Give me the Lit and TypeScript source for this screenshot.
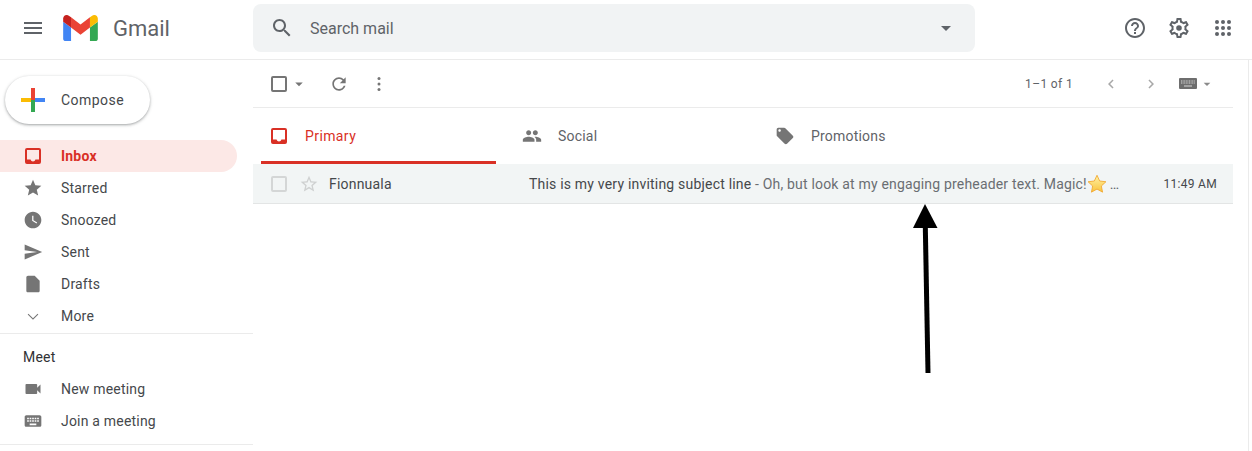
import { LitElement, html, css, svg } from 'lit';
import { customElement } from 'lit/decorators.js';

// material icon paths, 24x24 box
const P = {
  menu: 'M3 18h18v-2H3v2zm0-5h18v-2H3v2zm0-7v2h18V6H3z',
  search: 'M15.5 14h-.79l-.28-.27C15.41 12.59 16 11.11 16 9.5 16 5.91 13.09 3 9.5 3S3 5.91 3 9.5 5.91 16 9.5 16c1.61 0 3.09-.59 4.23-1.57l.27.28v.79l5 4.99L20.49 19l-4.99-5zm-6 0C7.01 14 5 11.99 5 9.5S7.01 5 9.5 5 14 7.01 14 9.5 11.99 14 9.5 14z',
  help: 'M11 18h2v-2h-2v2zm1-16C6.48 2 2 6.48 2 12s4.48 10 10 10 10-4.48 10-10S17.52 2 12 2zm0 18c-4.41 0-8-3.59-8-8s3.59-8 8-8 8 3.59 8 8-3.59 8-8 8zm0-14c-2.21 0-4 1.79-4 4h2c0-1.1.9-2 2-2s2 .9 2 2c0 2-3 1.75-3 5h2c0-2.25 3-2.5 3-5 0-2.21-1.79-4-4-4z',
  gear: 'M19.43 12.98c.04-.32.07-.64.07-.98 0-.34-.03-.66-.07-.98l2.11-1.65c.19-.15.24-.42.12-.64l-2-3.46c-.09-.16-.26-.25-.44-.25-.06 0-.12.01-.17.03l-2.49 1c-.52-.4-1.08-.73-1.69-.98l-.38-2.65C14.46 2.18 14.25 2 14 2h-4c-.25 0-.46.18-.49.42l-.38 2.65c-.61.25-1.17.59-1.69.98l-2.49-1c-.06-.02-.12-.03-.18-.03-.17 0-.34.09-.43.25l-2 3.46c-.13.22-.07.49.12.64l2.11 1.65c-.04.32-.07.65-.07.98 0 .33.03.66.07.98l-2.11 1.65c-.19.15-.24.42-.12.64l2 3.46c.09.16.26.25.44.25.06 0 .12-.01.17-.03l2.49-1c.52.4 1.08.73 1.69.98l.38 2.65c.03.24.24.42.49.42h4c.25 0 .46-.18.49-.42l.38-2.65c.61-.25 1.17-.59 1.69-.98l2.49 1c.06.02.12.03.18.03.17 0 .34-.09.43-.25l2-3.46c.12-.22.07-.49-.12-.64l-2.11-1.65zm-1.98-1.71c.04.31.05.52.05.73 0 .21-.02.43-.05.73l-.14 1.13.89.7 1.08.84-.7 1.21-1.27-.51-1.04-.42-.9.68c-.43.32-.84.56-1.25.73l-1.06.43-.16 1.13-.2 1.35h-1.4l-.19-1.35-.16-1.13-1.06-.43c-.43-.18-.83-.41-1.23-.71l-.91-.7-1.06.43-1.27.51-.7-1.21 1.08-.84.89-.7-.14-1.13c-.03-.31-.05-.54-.05-.74s.02-.43.05-.73l.14-1.13-.89-.7-1.08-.84.7-1.21 1.27.51 1.04.42.9-.68c.43-.32.84-.56 1.25-.73l1.06-.43.16-1.13.2-1.35h1.39l.19 1.35.16 1.13 1.06.43c.43.18.83.41 1.23.71l.91.7 1.06-.43 1.27-.51.7 1.21-1.07.85-.89.7.14 1.13zM12 9.200a2.800 2.800 0 1 0 0 5.600 2.800 2.800 0 0 0 0-5.600z',
  refresh: 'M17.65 6.35C16.2 4.9 14.21 4 12 4c-4.42 0-7.99 3.58-7.99 8s3.57 8 7.99 8c3.73 0 6.84-2.55 7.73-6h-2.08c-.82 2.33-3.04 4-5.65 4-3.31 0-6-2.69-6-6s2.69-6 6-6c1.66 0 3.14.69 4.22 1.78L13 11h7V4l-2.35 2.35z',
  star: 'M12 17.27L18.18 21l-1.64-7.03L22 9.24l-7.19-.61L12 2 9.19 8.63 2 9.24l5.46 4.73L5.82 21z',
  starOutline: 'M22 9.24l-7.19-.62L12 2 9.19 8.63 2 9.24l5.46 4.73L5.82 21 12 17.27 18.18 21l-1.63-7.03L22 9.24zM12 15.4l-3.76 2.27 1-4.28-3.32-2.88 4.38-.38L12 6.1l1.71 4.04 4.38.38-3.32 2.88 1 4.28L12 15.4z',
  clock: 'M11.99 2C6.47 2 2 6.48 2 12s4.47 10 9.99 10C17.52 22 22 17.52 22 12S17.52 2 11.99 2zM16.2 16.2L11 13V7h1.5v5.2l4.5 2.7-.8 1.3z',
  send: 'M2.01 21L23 12 2.01 3 2 10l15 2-15 2z',
  draft: 'M14 2H6c-1.1 0-1.99.9-1.99 2L4 20c0 1.1.89 2 1.99 2H18c1.1 0 2-.9 2-2V8l-6-6z',
  down: 'M6.500 9.200L12 14.700l5.500-5.500.9.9-6.400 6.400-6.400-6.400z',
  video: 'M17 10.5V7c0-.55-.45-1-1-1H4c-.55 0-1 .45-1 1v10c0 .55.45 1 1 1h12c.55 0 1-.45 1-1v-3.5l4 4v-11l-4 4z',
  keyboard: 'M20 5H4c-1.1 0-1.99.9-1.99 2L2 17c0 1.1.9 2 2 2h16c1.1 0 2-.9 2-2V7c0-1.1-.9-2-2-2zm-9 3h2v2h-2V8zm0 3h2v2h-2v-2zM8 8h2v2H8V8zm0 3h2v2H8v-2zm-1 2H5v-2h2v2zm0-3H5V8h2v2zm9 7H8v-2h8v2zm0-4h-2v-2h2v2zm0-3h-2V8h2v2zm3 3h-2v-2h2v2zm0-3h-2V8h2v2z',
  people: 'M16 11c1.66 0 2.99-1.34 2.99-3S17.66 5 16 5c-1.66 0-3 1.34-3 3s1.34 3 3 3zm-8 0c1.66 0 2.99-1.34 2.99-3S9.66 5 8 5C6.34 5 5 6.34 5 8s1.34 3 3 3zm0 2c-2.33 0-7 1.17-7 3.5V19h14v-2.5c0-2.33-4.67-3.5-7-3.5zm8 0c-.29 0-.62.02-.97.05 1.16.84 1.97 1.97 1.97 3.45V19h6v-2.5c0-2.33-4.67-3.5-7-3.5z',
  tag: 'M21.41 11.58l-9-9C12.05 2.22 11.55 2 11 2H4c-1.1 0-2 .9-2 2v7c0 .55.22 1.05.59 1.42l9 9c.36.36.86.58 1.41.58.55 0 1.05-.22 1.41-.59l7-7c.37-.36.59-.86.59-1.41 0-.55-.23-1.06-.59-1.42zM5.5 7C4.67 7 4 6.33 4 5.5S4.67 4 5.5 4 7 4.67 7 5.5 6.33 7 5.5 7z',
  chevLeft: 'M15.41 7.41L14 6l-6 6 6 6 1.41-1.41L10.83 12z',
  chevRight: 'M8.59 16.59L10 18l6-6-6-6-1.41 1.41L13.17 12z',
  caret: 'M7 10l5 5 5-5z',
};

const icon = (d: string, cls = '') => html`<svg class="icon ${cls}" viewBox="0 0 24 24"><path d=${d}></path></svg>`;

const inboxIcon = html`<svg class="inbox-icon" viewBox="0 0 16 16"><path fill-rule="evenodd" d="M2 0h12a2 2 0 0 1 2 2v12a2 2 0 0 1-2 2H2a2 2 0 0 1-2-2V2a2 2 0 0 1 2-2zM2 2v9.5h3.6c.3 1.3 1.2 2 2.4 2s2.1-.7 2.400-2H14V2z"></path></svg>`;

const nav = [
  { label: 'Starred', d: P.star },
  { label: 'Snoozed', d: P.clock },
  { label: 'Sent', d: P.send },
  { label: 'Drafts', d: P.draft },
  { label: 'More', d: P.down },
];

@customElement('app-root')
export class AppRoot extends LitElement {
  static styles = css`
    :host {
      display: block;
      position: relative;
      width: 1252px;
      height: 451px;
      overflow: hidden;
      background: #fff;
      color: #45484b;
      font-family: Roboto, "Liberation Sans", sans-serif;
      font-size: 14px;
      letter-spacing: 0.2px;
    }
    .icon { display: block; width: 24px; height: 24px; fill: #757575; flex: none; }

    /* header */
    .header { display: flex; align-items: center; height: 56px; padding-bottom: 3px; border-bottom: 1px solid #ebebeb; }
    .menu { margin-left: 21px; fill: #5f6368; }
    .logo { width: 35px; height: 26px; margin-left: 18px; flex: none; }
    .brand { width: 140px; margin-left: 15px; font-size: 22px; color: #5f6368; letter-spacing: 0; flex: none; }
    .search { display: flex; align-items: center; width: 722px; height: 48px; background: #f1f3f4; border-radius: 8px; flex: none; }
    .search .icon { margin-left: 17px; fill: #5f6368; }
    .search span { margin-left: 16px; font-size: 16px; color: #5f6368; letter-spacing: 0; flex: 1; }
    .search .caret { margin-right: 17px; fill: #5f6368; }
    .top-icons { display: flex; gap: 20px; margin-left: 148px; }
    .top-icons .icon { fill: #5f6368; }

    .body { display: flex; height: 391px; }

    /* sidebar */
    .side { width: 253px; flex: none; padding-top: 16px; }
    .compose { display: flex; align-items: center; width: 145px; height: 48px; margin-left: 5px; border-radius: 24px; background: #fff; box-shadow: 0 1px 2px rgba(60,64,67,.3), 0 1px 3px 1px rgba(60,64,67,.15); letter-spacing: 0.45px; color: #45484b; }
    .plus { width: 24px; height: 24px; margin-left: 16px; margin-right: 16px; }
    .items { margin-top: 16px; }
    .item { display: flex; align-items: center; height: 32px; width: 237px; border-radius: 0 16px 16px 0; }
    .item .icon { width: 20px; height: 20px; margin-left: 23px; margin-right: 18px; }
    .item.active { background: #fce8e6; color: #d93025; font-weight: 700; }
    .inbox-icon { display: block; width: 16px; height: 16px; fill: #d93025; flex: none; }
    .item .inbox-icon { margin-left: 25px; margin-right: 20px; }
    .sep { height: 1px; background: #ebebeb; }
    .s1 { margin-top: 1px; }
    .meet { display: flex; align-items: center; height: 32px; margin-top: 7px; padding-left: 23px; color: #303134; }
    .s2 { margin-top: 7px; }

    /* mail list */
    .main { width: 980px; flex: none; }
    .toolbar { display: flex; align-items: center; height: 47px; border-bottom: 1px solid #ebebeb; }
    .box { width: 16px; height: 16px; box-sizing: border-box; border: 2px solid #757575; border-radius: 2px; flex: none; }
    .toolbar .box { margin-left: 18px; }
    .toolbar .caret { width: 18px; height: 18px; margin-left: 3px; }
    .toolbar .refresh { width: 20px; height: 20px; margin-left: 21px; }
    .toolbar .dots { width: 20px; height: 20px; margin-left: 20px; }
    .pages { margin-left: auto; font-size: 12px; color: #5f6368; letter-spacing: 0.35px; }
    .chev { width: 18px; height: 18px; fill: #a8a8a8; }
    .c1 { margin-left: 29px; }
    .c2 { margin-left: 22px; }
    .kbd { display: block; width: 18px; height: 11px; margin-left: 19px; flex: none; }
    .toolbar .kcaret { width: 16px; height: 16px; margin-left: 2px; margin-right: 18px; fill: #8a8a8a; }

    .tabs { display: grid; grid-template-columns: 254px 254px 254px; height: 56px; }
    .tab { display: flex; align-items: center; color: #5f6368; height: 50px; padding-top: 3px; }
    .tab .icon { width: 20px; height: 20px; margin-left: 15px; margin-right: 16px; }
    .tab.primary { color: #d93025; border-bottom: 3px solid #d93025; margin-left: 8px; margin-right: 11px; border-radius: 3px 3px 0 0; letter-spacing: 0.4px; }
    .tab.primary .inbox-icon { margin-left: 10px; margin-right: 18px; }
    .tab.third .icon { margin-left: 14px; margin-right: 16px; }

    .row { display: flex; align-items: center; height: 39px; background: #f2f5f5; border-bottom: 1px solid #e3e5e5; white-space: nowrap; }
    .row .box { margin-left: 18px; border-color: #d4d6d6; }
    .row .star { width: 20px; height: 20px; margin-left: 12px; fill: #cfd1d1; }
    .sender { width: 200px; margin-left: 10px; }
    .subject { letter-spacing: 0.2px; }
    .preview { color: #6a6e72; letter-spacing: 0.18px; }
    .emoji { width: 20px; height: 20px; flex: none; }
    .dots-text { margin-left: 3px; color: #5f6368; }
    .time { margin-left: auto; margin-right: 16px; font-size: 12px; letter-spacing: 0.3px; }

    .rail { width: 0; height: 391px; margin-left: 15px; border-left: 1px solid #ebebeb; }

    .arrow { position: absolute; left: 905px; top: 200px; width: 40px; height: 176px; }
  `;

  render() {
    return html`
      <div class="header">
        ${icon(P.menu, 'menu')}
        <svg class="logo" viewBox="52 42 88 66">
          <path fill="#4285f4" d="M58 108h14V74L52 59v43c0 3.32 2.69 6 6 6"></path>
          <path fill="#34a853" d="M120 108h14c3.32 0 6-2.69 6-6V59l-20 15"></path>
          <path fill="#fbbc04" d="M120 48v26l20-15v-8c0-7.42-8.47-11.65-14.4-7.2"></path>
          <path fill="#ea4335" d="M72 74V48l24 18 24-18v26L96 92"></path>
          <path fill="#c5221f" d="M52 51v8l20 15V48l-5.6-4.2c-5.94-4.45-14.4-.22-14.4 7.2"></path>
        </svg>
        <div class="brand">Gmail</div>
        <div class="search">
          ${icon(P.search)}
          <span>Search mail</span>
          ${icon(P.caret, 'caret')}
        </div>
        <div class="top-icons">
          ${icon(P.help)}
          ${icon(P.gear)}
          <svg class="icon" viewBox="0 0 24 24">
            ${[6, 12, 18].map(y => [6, 12, 18].map(x => svg`<circle cx=${x} cy=${y} r="2"></circle>`))}
          </svg>
        </div>
      </div>

      <div class="body">
        <div class="side">
          <div class="compose">
            <svg class="plus" viewBox="0 0 24 24">
              <rect x="0" y="10" width="12" height="4" fill="#fbbc04"></rect>
              <rect x="12" y="10" width="12" height="4" fill="#4285f4"></rect>
              <rect x="10" y="12" width="4" height="12" fill="#34a853"></rect>
              <rect x="10" y="0" width="4" height="12" fill="#ea4335"></rect>
            </svg>
            Compose
          </div>
          <div class="items">
            <div class="item active">${inboxIcon}Inbox</div>
            ${nav.map(n => html`<div class="item">${icon(n.d)}${n.label}</div>`)}
          </div>
          <div class="sep s1"></div>
          <div class="meet">Meet</div>
          <div class="item">${icon(P.video)}New meeting</div>
          <div class="item">${icon(P.keyboard)}Join a meeting</div>
          <div class="sep s2"></div>
        </div>

        <div class="main">
          <div class="toolbar">
            <div class="box"></div>
            ${icon(P.caret, 'caret')}
            ${icon(P.refresh, 'refresh')}
            <svg class="icon dots" viewBox="0 0 20 20">
              <circle cx="10" cy="4.500" r="1.500"></circle><circle cx="10" cy="10" r="1.500"></circle><circle cx="10" cy="15.500" r="1.500"></circle>
            </svg>
            <span class="pages">1–1 of 1</span>
            ${icon(P.chevLeft, 'chev c1')}
            ${icon(P.chevRight, 'chev c2')}
            <svg class="kbd" viewBox="0 0 18 11">
              <rect width="18" height="11" rx="1" fill="#6e6e6e"></rect>
              <path d="M2 3h14M2 5h14" stroke="#d8d8d8" stroke-width="1" stroke-dasharray="1 .6"></path>
              <path d="M5 8h8" stroke="#d8d8d8" stroke-width="1"></path>
            </svg>
            ${icon(P.caret, 'kcaret')}
          </div>
          <div class="tabs">
            <div class="tab primary">${inboxIcon}Primary</div>
            <div class="tab">${icon(P.people)}Social</div>
            <div class="tab third">${icon(P.tag)}Promotions</div>
          </div>
          <div class="row">
            <div class="box"></div>
            ${icon(P.starOutline, 'star')}
            <div class="sender">Fionnuala</div>
            <span class="subject">This is my very inviting subject line</span>
            <span class="preview">&nbsp;- Oh, but look at my engaging preheader text. Magic!</span>
            <svg class="emoji" viewBox="0 0 24 24">
              <defs><linearGradient id="g" x1="0" y1="0" x2="0" y2="1"><stop offset="0" stop-color="#fff3a8"></stop><stop offset="1" stop-color="#f9c33c"></stop></linearGradient></defs>
              <path fill="url(#g)" stroke="#f0a52a" stroke-width="1" stroke-linejoin="round" d="M12 1.500l3.200 6.900 7.500.9-5.500 5.100 1.500 7.400L12 18.100l-6.700 3.700 1.500-7.400L1.300 9.300l7.500-.9z"></path>
            </svg>
            <span class="dots-text">…</span>
            <span class="time">11:49 AM</span>
          </div>
        </div>
        <div class="rail"></div>
      </div>

      <svg class="arrow" viewBox="0 0 40 176">
        <path d="M20 4L32.500 28H8z" fill="#000"></path>
        <path d="M20.300 26L23 173" stroke="#000" stroke-width="5" fill="none"></path>
      </svg>
    `;
  }
}
